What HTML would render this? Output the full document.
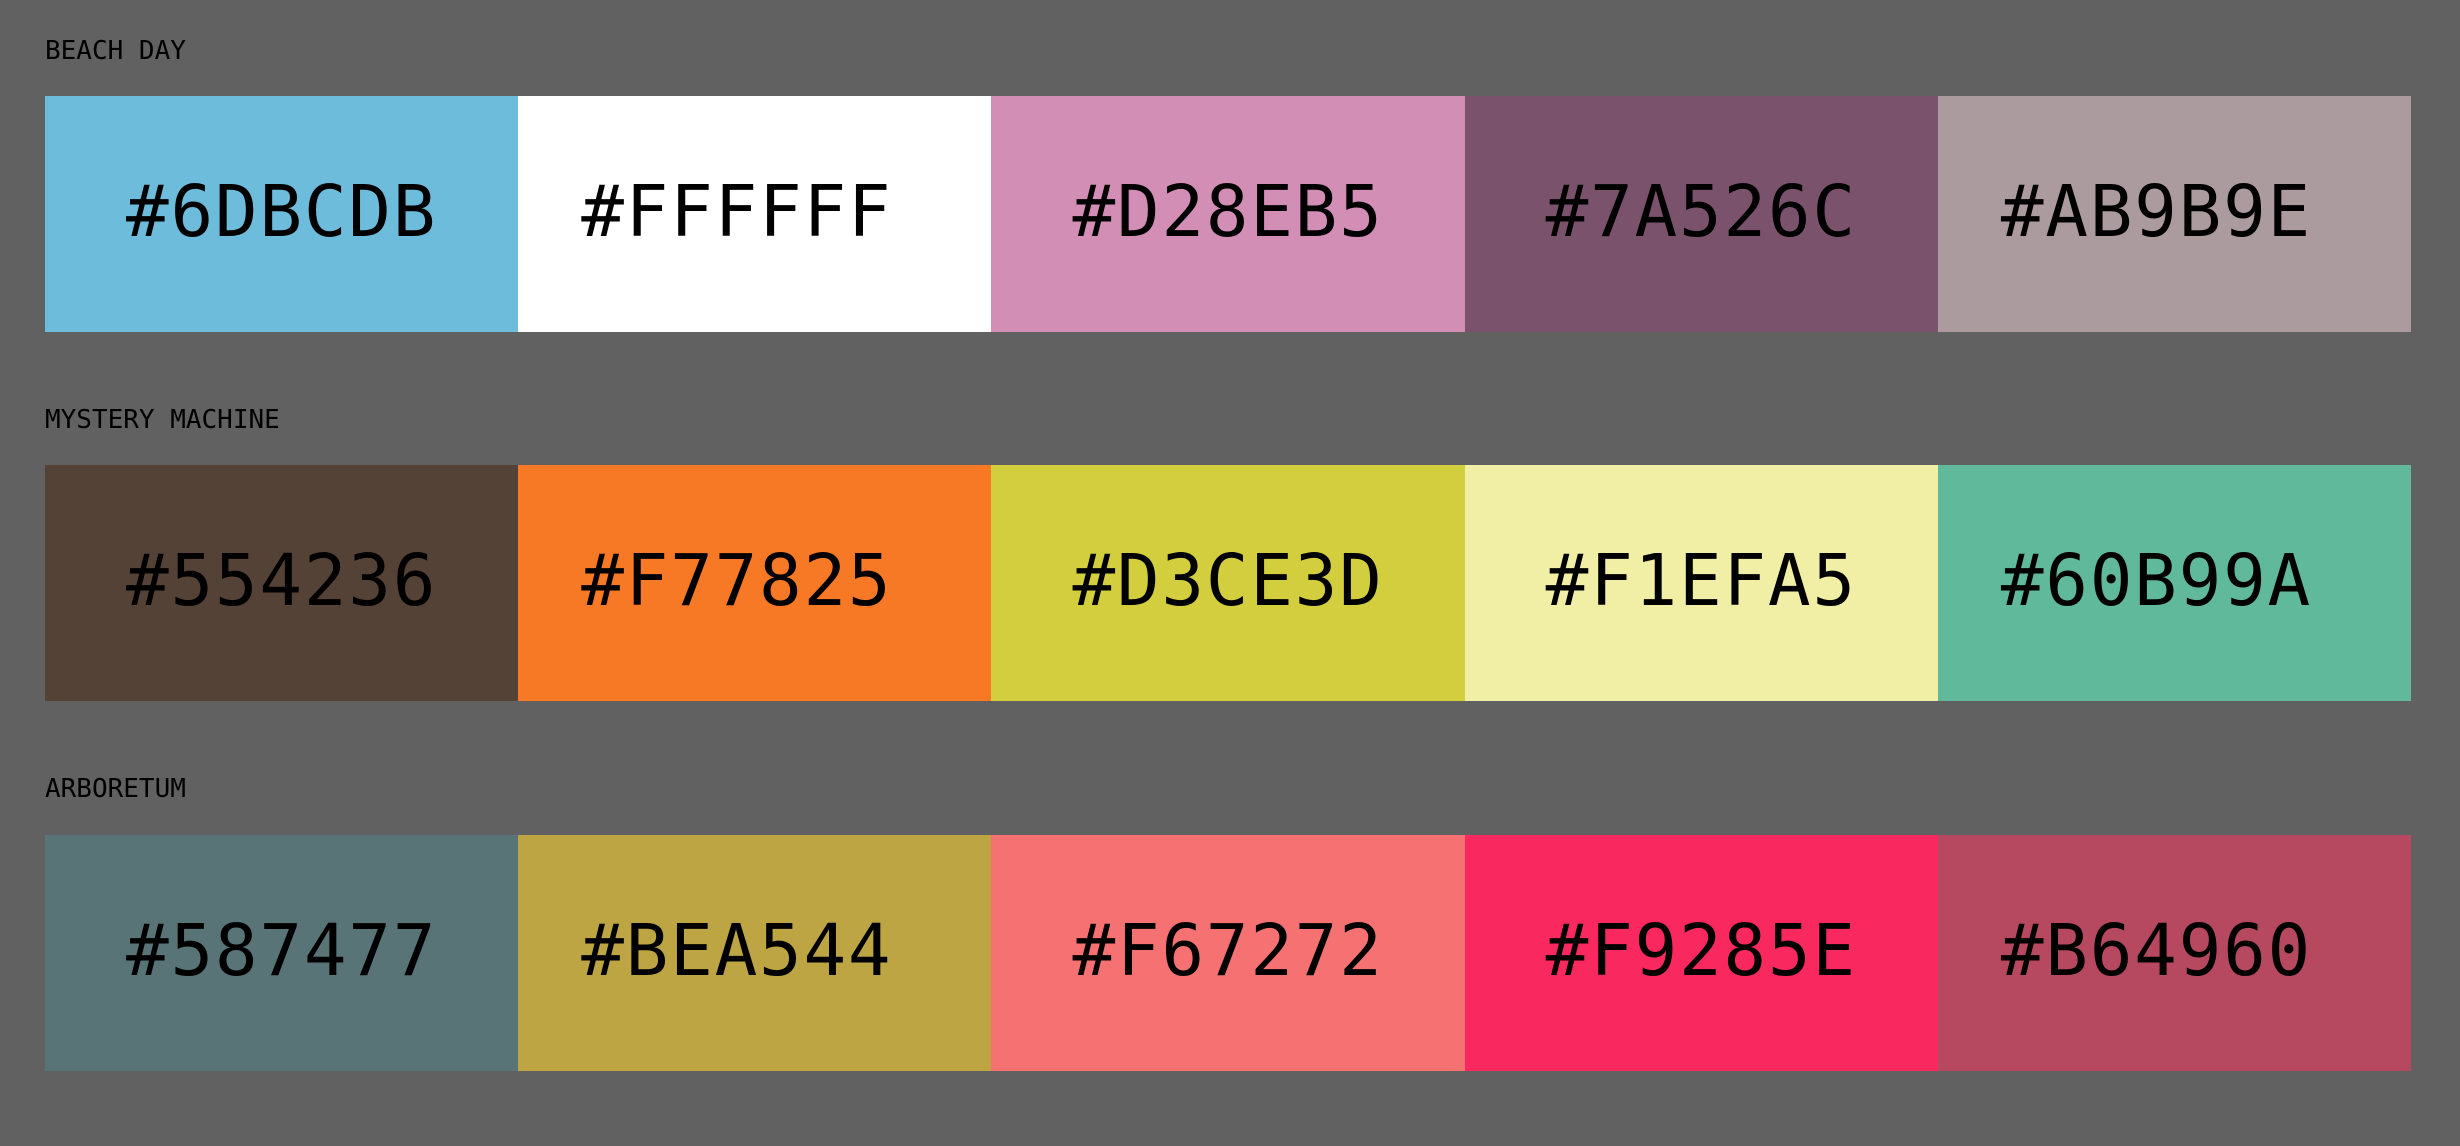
<!DOCTYPE html>
<html><head><meta charset="utf-8"><style>
html,body{margin:0;padding:0;background:#616161;width:2460px;height:1146px;overflow:hidden}
.lbl{position:absolute;left:45px;font-family:"DejaVu Sans Mono",monospace;font-size:26px;color:#000;line-height:1}
.row{position:absolute;left:45px;width:2366px;height:236px;display:flex}
.row div{flex:1;display:flex;align-items:center;justify-content:center;font-family:"DejaVu Sans Mono",monospace;font-size:71px;letter-spacing:1.7px;color:#000}
.row div span{position:relative;top:-3px}
.row div:nth-child(2) span,.row div:nth-child(5) span{left:-18px}
</style></head><body>
<div class="lbl" style="top:38px">BEACH DAY</div>
<div class="row" style="top:96px">
<div style="background:#6DBCDB"><span>#6DBCDB</span></div><div style="background:#FFFFFF"><span>#FFFFFF</span></div><div style="background:#D28EB5"><span>#D28EB5</span></div><div style="background:#7A526C"><span>#7A526C</span></div><div style="background:#AB9B9E"><span>#AB9B9E</span></div></div>
<div class="lbl" style="top:407px">MYSTERY MACHINE</div>
<div class="row" style="top:465px">
<div style="background:#554236"><span>#554236</span></div><div style="background:#F77825"><span>#F77825</span></div><div style="background:#D3CE3D"><span>#D3CE3D</span></div><div style="background:#F1EFA5"><span>#F1EFA5</span></div><div style="background:#60B99A"><span>#60B99A</span></div></div>
<div class="lbl" style="top:776px">ARBORETUM</div>
<div class="row" style="top:835px">
<div style="background:#587477"><span>#587477</span></div><div style="background:#BEA544"><span>#BEA544</span></div><div style="background:#F67272"><span>#F67272</span></div><div style="background:#F9285E"><span>#F9285E</span></div><div style="background:#B64960"><span>#B64960</span></div></div>
</body></html>
